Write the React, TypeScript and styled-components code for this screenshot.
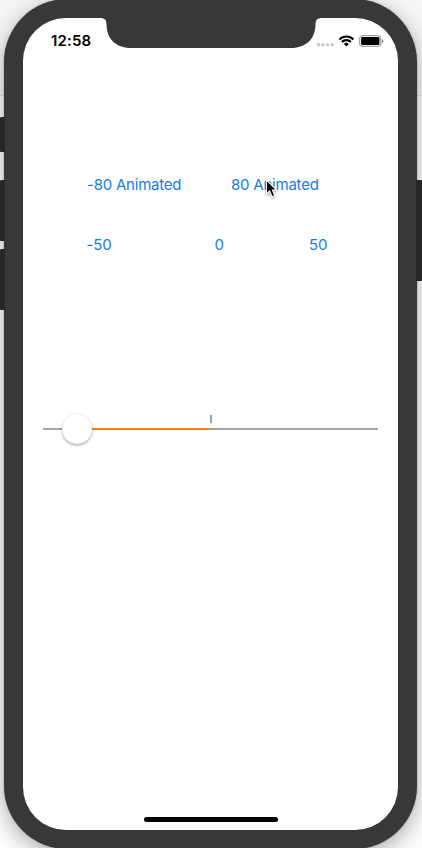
import React from "react";
import styled, { createGlobalStyle } from "styled-components";

const GlobalStyle = createGlobalStyle`
  * { box-sizing: border-box; }
  body { margin: 0; overflow: hidden; background: #fff; }
`;

const Desktop = styled.main`
  position: relative;
  display: flex;
  justify-content: center;
  width: 422px;
  height: 848px;
  padding-right: 1px;
  overflow: hidden;
  background: linear-gradient(#f6f6f6 0 95px, #e2e2e2 95px 96px, #fdfdfd 96px);
  font-family: Inter, "Liberation Sans", sans-serif;
`;

const Device = styled.div`
  flex: none;
  width: 413px;
  height: 850px;
  margin-top: -1px;
  padding: 19px;
  border-radius: 63px;
  background: #383838;
  box-shadow: 0 0 2px rgba(0, 0, 0, 0.3), 0 6px 22px rgba(0, 0, 0, 0.32);
`;

const SideButton = styled.span<{ $side: "left" | "right"; $top: number; $height: number }>`
  position: absolute;
  ${(p) => p.$side}: -1px;
  top: ${(p) => p.$top}px;
  width: ${(p) => (p.$side === "left" ? 6 : 7)}px;
  height: ${(p) => p.$height}px;
  border-radius: ${(p) => (p.$side === "left" ? "3px 0 0 3px" : "0 3px 3px 0")};
  background: #262626;
`;

const Screen = styled.div`
  position: relative;
  display: flex;
  flex-direction: column;
  width: 375px;
  height: 812px;
  border-radius: 43px;
  background: #fff;
  overflow: hidden;
`;

const Notch = styled.svg`
  position: absolute;
  top: 0;
  left: 77px;
`;

const StatusBar = styled.header`
  display: flex;
  justify-content: space-between;
  align-items: center;
  height: 46px;
  padding: 0 14px 0 28px;
`;

const Clock = styled.time`
  align-self: flex-start;
  margin-top: 13px;
  font-size: 15px;
  font-weight: 600;
  letter-spacing: 0.15px;
  line-height: 19px;
`;

const StatusIcons = styled.div`
  display: flex;
  align-items: center;
`;

const Content = styled.section`
  display: flex;
  flex-direction: column;
  flex: 1;
`;

const ButtonRow = styled.div<{ $top: number; $left: number }>`
  display: flex;
  align-items: flex-start;
  height: 20px;
  margin-top: ${(p) => p.$top}px;
  padding-left: ${(p) => p.$left}px;
`;

const LinkButton = styled.button<{ $width: number; $spacing?: number }>`
  width: ${(p) => p.$width}px;
  padding: 0;
  border: 0;
  background: none;
  color: #177ddc;
  font: 400 15px/19px Inter, "Liberation Sans", sans-serif;
  letter-spacing: ${(p) => p.$spacing ?? 0}px;
  text-align: left;
  white-space: nowrap;
`;

const Slider = styled.div`
  position: relative;
  display: flex;
  align-items: center;
  height: 30px;
  margin: 159px 20px 0;
`;

const Track = styled.div`
  display: flex;
  width: 335px;
  height: 2px;
  background: #a2a2a2;
`;

const Fill = styled.div`
  width: 133px;
  margin-left: 34px;
  background: #ff7d12;
`;

const Tick = styled.span`
  position: absolute;
  left: 166.500px;
  top: 1px;
  width: 2px;
  height: 8px;
  background: #9c9c9c;
`;

const Thumb = styled.span`
  position: absolute;
  left: 18.500px;
  top: 0;
  width: 30px;
  height: 30px;
  border-radius: 50%;
  background: #fff;
  box-shadow: 0 1.5px 3px rgba(0, 0, 0, 0.32), 0 0 1px rgba(0, 0, 0, 0.12);
`;

const HomeIndicator = styled.div`
  width: 134px;
  height: 5px;
  margin: 0 auto 8px;
  border-radius: 3px;
  background: #000;
`;

const Cursor = styled.svg`
  position: absolute;
  left: 264px;
  top: 178px;
  filter: drop-shadow(0 1px 1px rgba(0, 0, 0, 0.4));
`;

export default function App() {
  return (
    <>
      <GlobalStyle />
      <Desktop>
        <Device>
          <Screen>
            <Notch width="222" height="31" viewBox="0 0 222 31">
              <path
                d="M0 0H222C217.500 0 215.500 2 215.500 6C215.500 21 206 30 191 30H31C16 30 6.500 21 6.500 6C6.500 2 4.500 0 0 0Z"
                fill="#383838"
              />
            </Notch>
            <StatusBar>
              <Clock>12:58</Clock>
              <StatusIcons>
                <svg width="68" height="16" viewBox="316 33 68 16">
                  <g fill="#c8c8c8">
                    <circle cx="318.500" cy="44.700" r="1.650" />
                    <circle cx="323" cy="44.700" r="1.650" />
                    <circle cx="327.700" cy="44.700" r="1.650" />
                    <circle cx="332.300" cy="44.700" r="1.650" />
                  </g>
                  <g fill="none" stroke="#000" strokeWidth="2.100">
                    <path d="M339.400 39.400A10 10 0 0 1 353.400 39.400" />
                    <path d="M341.900 42A6.300 6.300 0 0 1 350.900 42" />
                  </g>
                  <path d="M343.900 43.900A3.700 3.700 0 0 1 348.900 43.900L346.400 46.400Z" />
                  <rect x="359.700" y="35.700" width="21.100" height="10.600" rx="2.300" fill="none" stroke="#8c8c8c" />
                  <rect x="361.100" y="37.100" width="18.300" height="7.800" rx="1" />
                  <path d="M382 39.200C383.700 39.900 383.700 42.200 382 42.900Z" fill="#777" />
                </svg>
              </StatusIcons>
            </StatusBar>
            <Content>
              <ButtonRow $top={111} $left={64}>
                <LinkButton $width={144} $spacing={-0.22}>-80 Animated</LinkButton>
                <LinkButton $width={100} $spacing={-0.22}>80 Animated</LinkButton>
              </ButtonRow>
              <ButtonRow $top={40} $left={63.5}>
                <LinkButton $width={128} $spacing={-0.1}>-50</LinkButton>
                <LinkButton $width={94.5}>0</LinkButton>
                <LinkButton $width={40}>50</LinkButton>
              </ButtonRow>
              <Slider>
                <Track>
                  <Fill />
                </Track>
                <Tick />
                <Thumb />
              </Slider>
            </Content>
            <HomeIndicator />
          </Screen>
        </Device>
        <SideButton $side="left" $top={117} $height={35} />
        <SideButton $side="left" $top={180} $height={61} />
        <SideButton $side="left" $top={249} $height={61} />
        <SideButton $side="right" $top={180} $height={101} />
        <Cursor width="14" height="22" viewBox="0 0 14 22">
          <path
            d="M2.500 2V16L5.700 13L8 18.700L10.700 17.500L8.400 12H12.600Z"
            fill="#000"
            stroke="#fff"
            strokeWidth="1.100"
          />
        </Cursor>
      </Desktop>
    </>
  );
}
